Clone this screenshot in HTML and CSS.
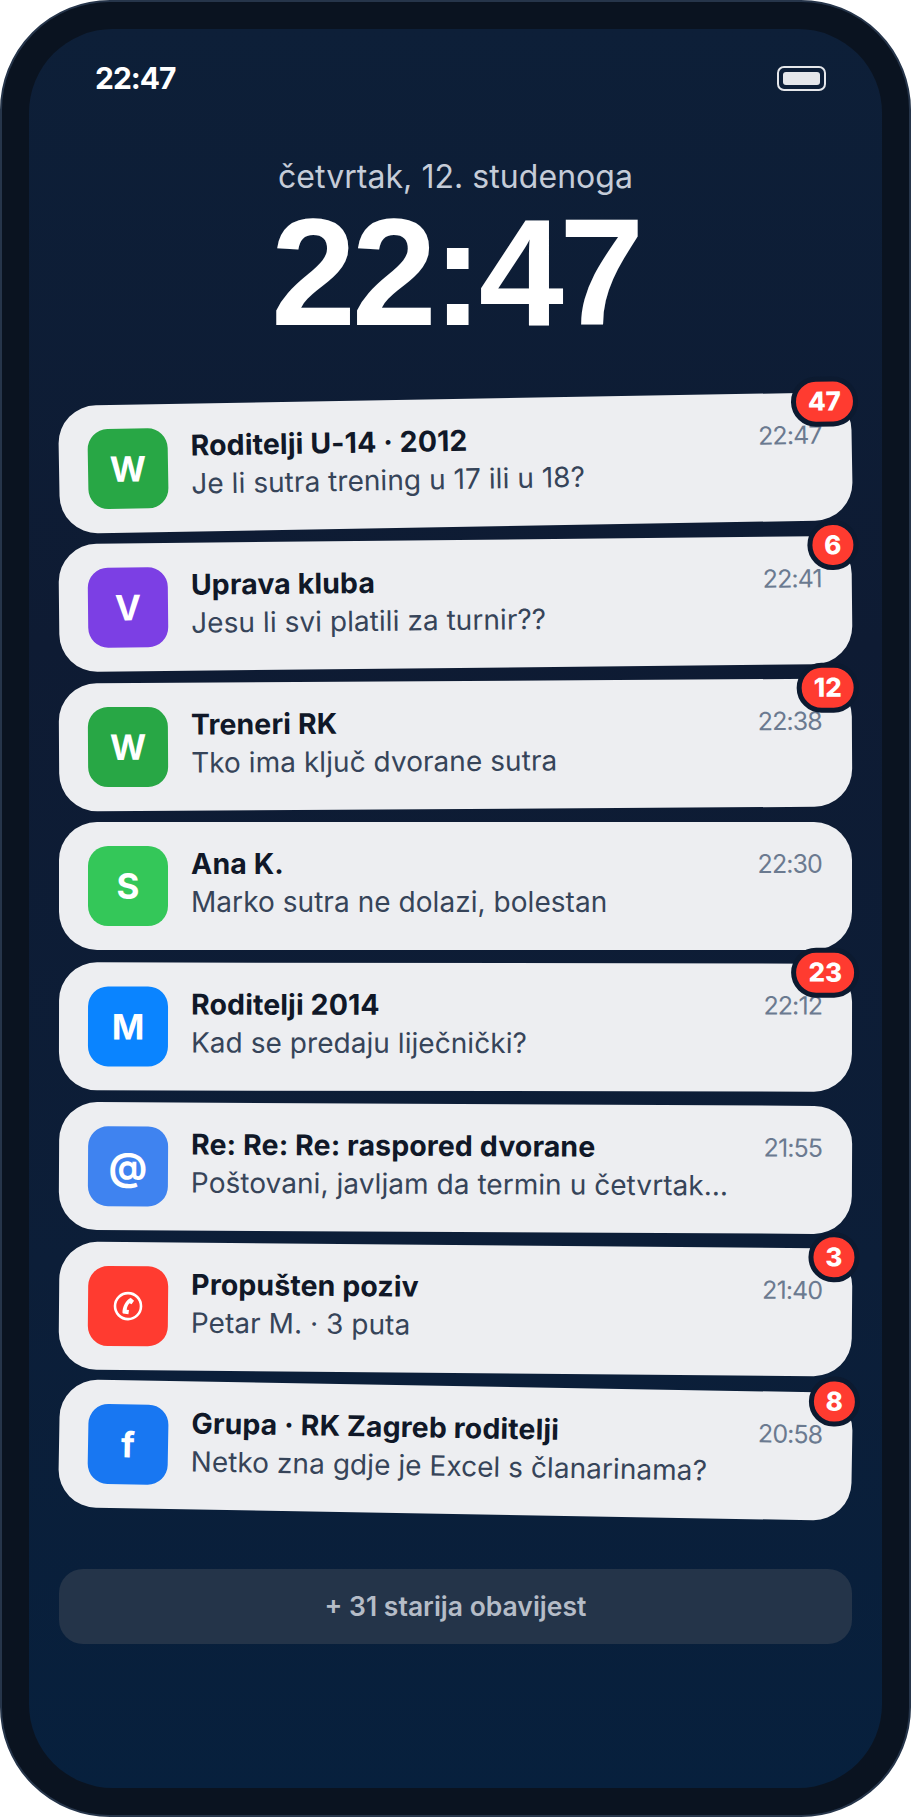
FILE: index.html
```html
<!DOCTYPE html>
<html lang="hr">
<head>
    <meta charset="UTF-8">
    <meta name="viewport" content="width=device-width, initial-scale=1.0">
    <title>Zaključani zaslon</title>
    <link rel="stylesheet" href="styles.css">
</head>
<body>
    <div class="phone">
        <main class="screen">
            <!-- Status bar -->
            <header class="status-bar">
                <span class="status-time">22:47</span>
                <span class="battery"><span class="battery-fill"></span></span>
            </header>

            <!-- Clock -->
            <section class="clock">
                <p class="clock-date">četvrtak, 12. studenoga</p>
                <p class="clock-time">22:47</p>
            </section>

            <!-- Notifications -->
            <section class="stack">
                <article class="card">
                    <div class="app-icon icon-whatsapp">W</div>
                    <div class="card-text">
                        <h3>Roditelji U-14 · 2012</h3>
                        <p>Je li sutra trening u 17 ili u 18?</p>
                    </div>
                    <time>22:47</time>
                    <span class="badge">47</span>
                </article>
                <article class="card">
                    <div class="app-icon icon-viber">V</div>
                    <div class="card-text">
                        <h3>Uprava kluba</h3>
                        <p>Jesu li svi platili za turnir??</p>
                    </div>
                    <time>22:41</time>
                    <span class="badge">6</span>
                </article>
                <article class="card">
                    <div class="app-icon icon-whatsapp">W</div>
                    <div class="card-text">
                        <h3>Treneri RK</h3>
                        <p>Tko ima ključ dvorane sutra</p>
                    </div>
                    <time>22:38</time>
                    <span class="badge">12</span>
                </article>
                <article class="card">
                    <div class="app-icon icon-sms">S</div>
                    <div class="card-text">
                        <h3>Ana K.</h3>
                        <p>Marko sutra ne dolazi, bolestan</p>
                    </div>
                    <time>22:30</time>
                </article>
                <article class="card">
                    <div class="app-icon icon-messenger">M</div>
                    <div class="card-text">
                        <h3>Roditelji 2014</h3>
                        <p>Kad se predaju liječnički?</p>
                    </div>
                    <time>22:12</time>
                    <span class="badge">23</span>
                </article>
                <article class="card">
                    <div class="app-icon icon-mail">@</div>
                    <div class="card-text">
                        <h3>Re: Re: Re: raspored dvorane</h3>
                        <p>Poštovani, javljam da termin u četvrtak…</p>
                    </div>
                    <time>21:55</time>
                </article>
                <article class="card">
                    <div class="app-icon icon-phone">
                        <svg width="30" height="30" viewBox="0 0 30 30" fill="none">
                            <circle cx="15" cy="15" r="13" stroke="#fff" stroke-width="2.6"/>
                            <path d="M17.500 6.500l3.500 3-2.500 3.500-2-1c-1.500 1.500-2.500 4-2.800 6.500l2.300.3-.5 4.200-5.500-.5-.5-1c0-6 3-12.500 8.500-15z" fill="#fff"/>
                        </svg>
                    </div>
                    <div class="card-text">
                        <h3>Propušten poziv</h3>
                        <p>Petar M. · 3 puta</p>
                    </div>
                    <time>21:40</time>
                    <span class="badge">3</span>
                </article>
                <article class="card">
                    <div class="app-icon icon-facebook">f</div>
                    <div class="card-text">
                        <h3>Grupa · RK Zagreb roditelji</h3>
                        <p>Netko zna gdje je Excel s članarinama?</p>
                    </div>
                    <time>20:58</time>
                    <span class="badge">8</span>
                </article>
            </section>

            <div class="older">+ 31 starija obavijest</div>
        </main>
    </div>
</body>
</html>
```

FILE: styles.css
```css
* {
    box-sizing: border-box;
}

body {
    margin: 0;
    background-color: #ffffff;
    font-family: Inter, "Liberation Sans", sans-serif;
}

h3, p {
    margin: 0;
}

.phone {
    width: 911px;
    height: 1817px;
    padding: 27px;
    background-color: #0a1320;
    border: 2px solid #26354a;
    border-radius: 110px;
}

.screen {
    height: 100%;
    padding: 33px 30px 0;
    border-radius: 84px;
    background: linear-gradient(180deg, #0d1f38 0%, #0e1b33 35%, #0c1e38 70%, #07203d 100%);
}

/* Status bar */
.status-bar {
    display: flex;
    justify-content: space-between;
    align-items: center;
    padding: 0 26px 0 36px;
    height: 32px;
}

.status-time {
    color: #ffffff;
    font-size: 30px;
    font-weight: 700;
    letter-spacing: -1px;
}

.battery {
    width: 49px;
    height: 25px;
    padding: 4px;
    border: 2px solid #e5e7eb;
    border-radius: 7px;
}

.battery-fill {
    display: block;
    height: 100%;
    background-color: #e5e7eb;
    border-radius: 3px;
}

/* Clock */
.clock {
    margin-top: 63px;
    text-align: center;
}

.clock-date {
    color: #c5ccd8;
    font-size: 32px;
    line-height: 40px;
    letter-spacing: 0.05px;
}

.clock-time {
    color: #ffffff;
    font-family: "Liberation Sans", sans-serif;
    font-size: 153px;
    font-weight: 700;
    line-height: 150px;
    letter-spacing: -4.5px;
}

/* Notification cards */
.stack {
    display: flex;
    flex-direction: column;
    gap: 13px;
    margin-top: 52px;
}

.card {
    position: relative;
    display: flex;
    align-items: center;
    gap: 23px;
    height: 128px;
    padding: 0 30px 0 29px;
    background-color: #edeef1;
    border-radius: 38px;
}

.card:nth-child(1) { transform: rotate(-1deg); }
.card:nth-child(2) { transform: rotate(-0.6deg); }
.card:nth-child(3) { transform: rotate(-0.35deg); }
.card:nth-child(5) { transform: rotate(0.1deg); }
.card:nth-child(6) { transform: rotate(0.3deg); }
.card:nth-child(7) { transform: rotate(0.5deg); }
.card:nth-child(8) { transform: rotate(1deg); }

.app-icon {
    display: flex;
    justify-content: center;
    align-items: center;
    flex-shrink: 0;
    width: 80px;
    height: 80px;
    border-radius: 20px;
    color: #ffffff;
    font-size: 35px;
    font-weight: 700;
}

.icon-whatsapp { background-color: #28a745; }
.icon-viber { background-color: #7c3fe4; }
.icon-sms { background-color: #34c759; }
.icon-messenger { background-color: #0a84ff; }
.icon-mail { background-color: #3f83f0; font-size: 38px; }
.icon-phone { background-color: #ff3b30; }
.icon-facebook { background-color: #1877f2; }

.card-text {
    flex: 1;
    min-width: 0;
    padding-bottom: 7px;
    white-space: nowrap;
}

.card-text h3 {
    color: #101828;
    font-size: 28.5px;
    font-weight: 700;
    line-height: 39px;
    letter-spacing: 0.1px;
}

.card-text p {
    color: #364459;
    font-size: 28px;
    line-height: 38px;
    letter-spacing: 0.05px;
}

.card time {
    align-self: flex-start;
    margin-top: 25px;
    color: #6b7a90;
    font-size: 25px;
    line-height: 34px;
    letter-spacing: -0.9px;
}

.badge {
    position: absolute;
    top: -16px;
    right: -7px;
    min-width: 50px;
    height: 50px;
    padding: 0 12px;
    border: 5px solid #0c1a30;
    border-radius: 25px;
    background-color: #ff3b30;
    color: #ffffff;
    font-size: 26px;
    font-weight: 800;
    line-height: 40px;
    text-align: center;
}

/* Older notifications */
.older {
    margin-top: 55px;
    height: 75px;
    border-radius: 24px;
    background-color: #243449;
    color: #b5bcc7;
    font-size: 26.5px;
    font-weight: 600;
    line-height: 75px;
    text-align: center;
}
```
